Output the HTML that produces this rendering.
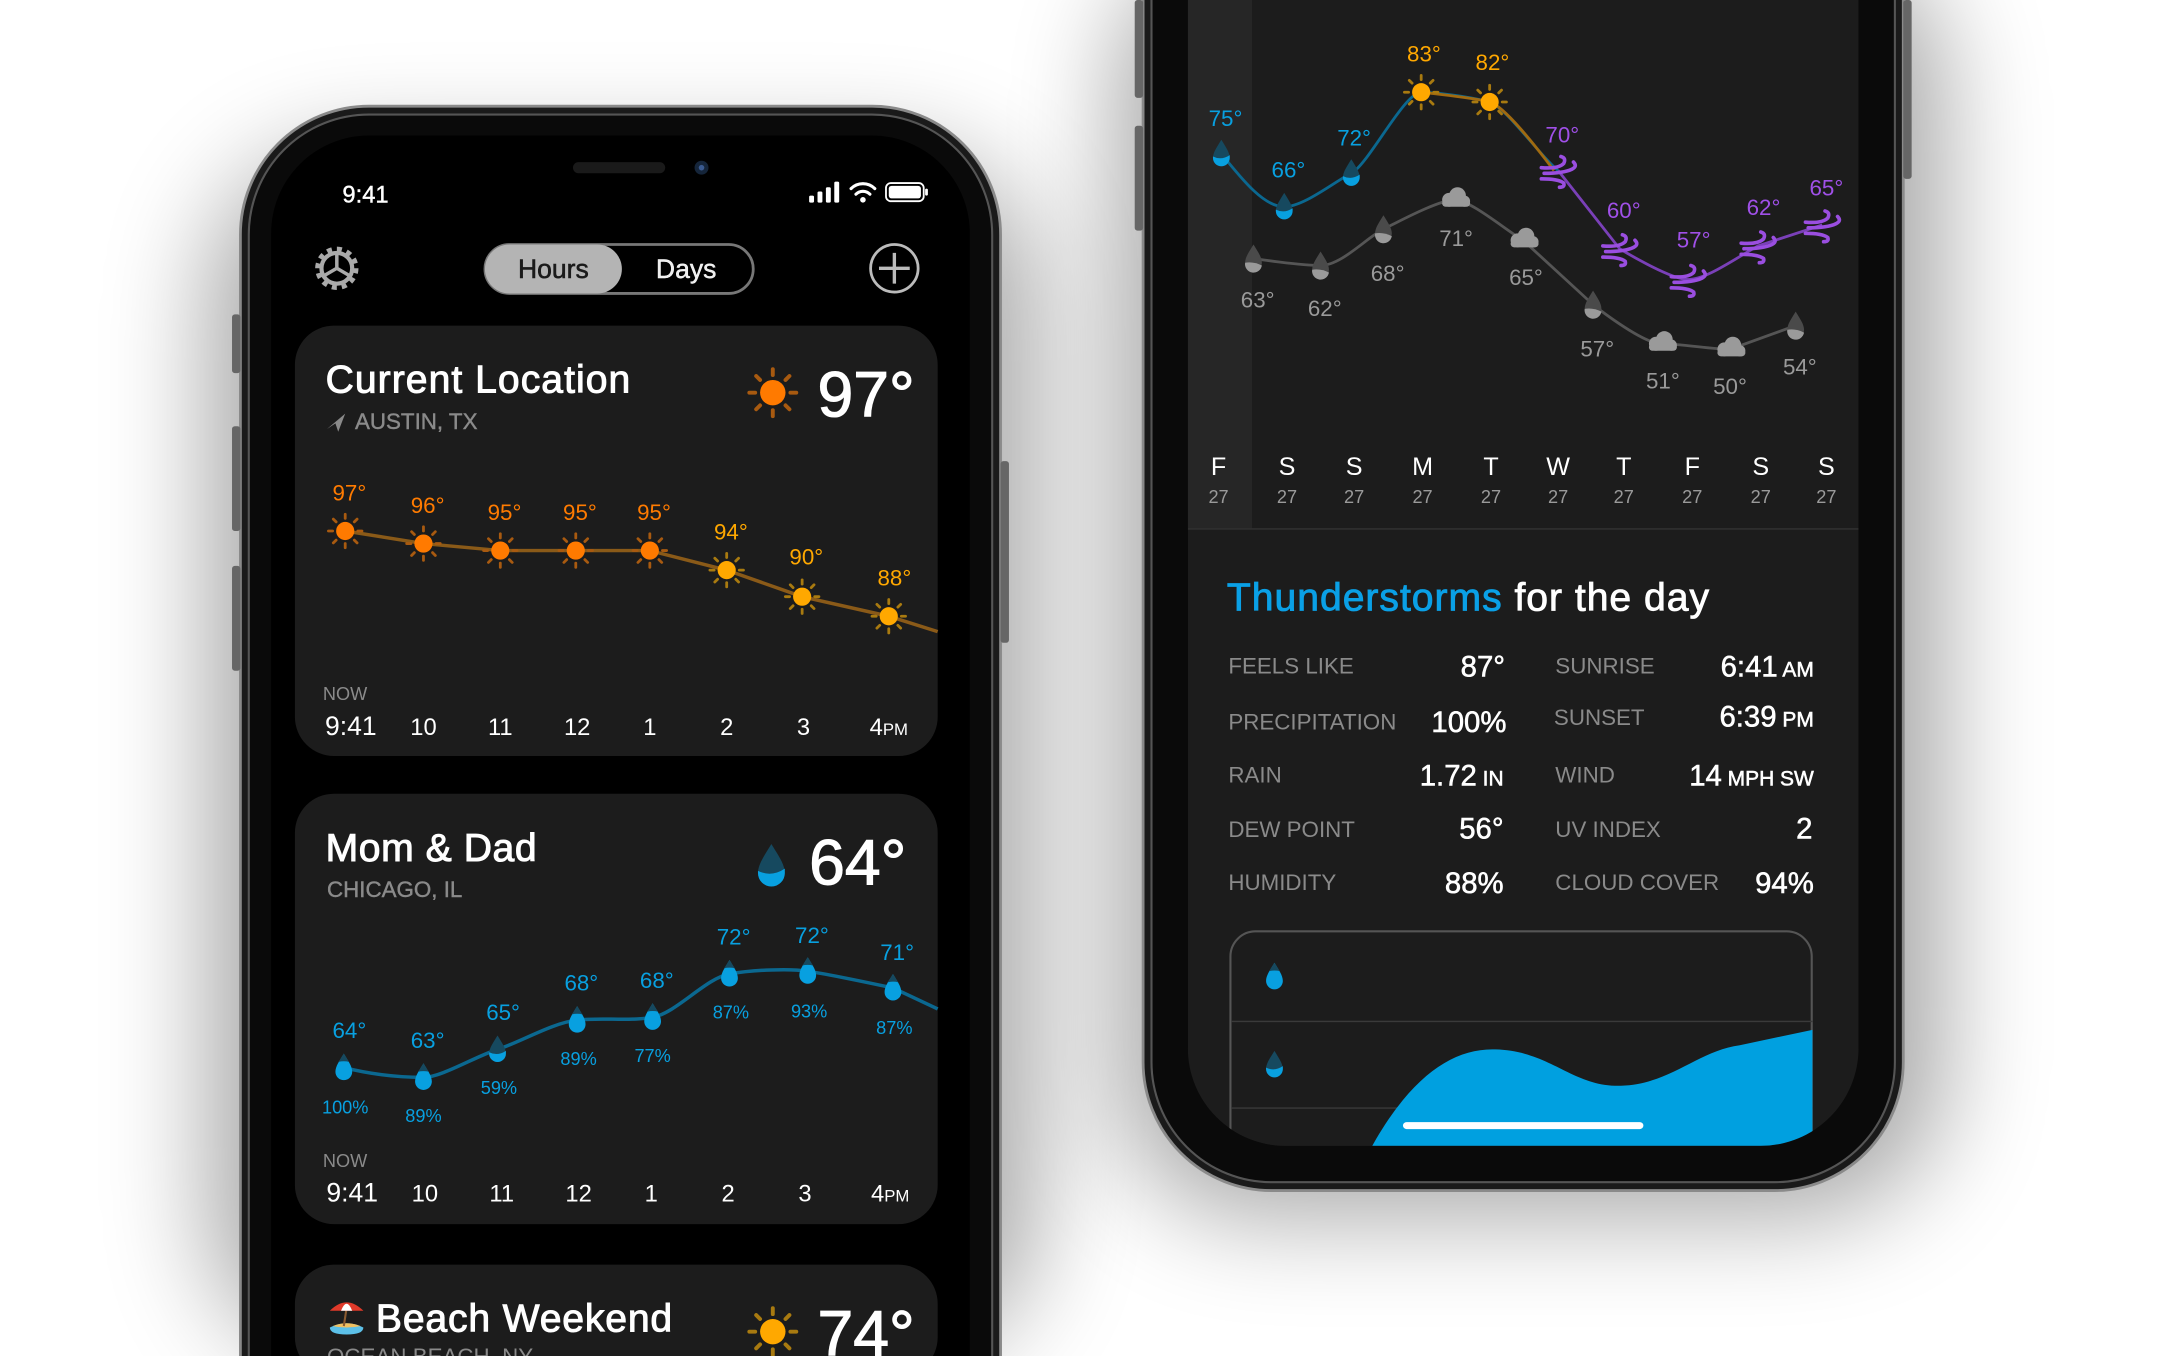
<!DOCTYPE html>
<html><head><meta charset="utf-8"><style>
html,body{margin:0;padding:0;background:#fff;width:2180px;height:1356px;overflow:hidden}
svg{display:block;overflow:hidden}
text{font-family:"Liberation Sans","Noto Sans CJK SC",sans-serif}
.b{stroke:#fff;stroke-width:.5}
</style></head><body>
<svg width="2180" height="1356" viewBox="0 0 1560 970.4" xmlns="http://www.w3.org/2000/svg">
<defs>
<clipPath id="page"><rect x="0" y="0" width="1560" height="970.4"/></clipPath>
<filter id="sh" x="-30%" y="-30%" width="160%" height="160%"><feGaussianBlur stdDeviation="38"/></filter>
<g id="sunO"><g stroke="#a85a10" stroke-width="2" stroke-linecap="round"><line x1="0" y1="-12" x2="0" y2="-9"/><line x1="0" y1="12" x2="0" y2="9"/><line x1="-12" y1="0" x2="-9" y2="0"/><line x1="12" y1="0" x2="9" y2="0"/><line x1="-8.5" y1="-8.5" x2="-6.5" y2="-6.5"/><line x1="8.5" y1="8.5" x2="6.5" y2="6.5"/><line x1="-8.5" y1="8.5" x2="-6.5" y2="6.5"/><line x1="8.5" y1="-8.5" x2="6.5" y2="-6.5"/></g><circle r="6.5" fill="#ff7a00"/></g>
<g id="sunY"><g stroke="#a87a10" stroke-width="2" stroke-linecap="round"><line x1="0" y1="-12" x2="0" y2="-9"/><line x1="0" y1="12" x2="0" y2="9"/><line x1="-12" y1="0" x2="-9" y2="0"/><line x1="12" y1="0" x2="9" y2="0"/><line x1="-8.5" y1="-8.5" x2="-6.5" y2="-6.5"/><line x1="8.5" y1="8.5" x2="6.5" y2="6.5"/><line x1="-8.5" y1="8.5" x2="-6.5" y2="6.5"/><line x1="8.5" y1="-8.5" x2="6.5" y2="-6.5"/></g><circle r="6.5" fill="#ffa800"/></g>
<g id="dropB"><path d="M0,-10 C3,-5 6,-1 6,3 A6,6 0 0 1 -6,3 C-6,-1 -3,-5 0,-10Z" fill="#16495f"/><path d="M-6,2 Q0,5 6,1 L6,3 A6,6 0 0 1 -6,3Z" fill="#08a0e0"/></g>
<g id="dropF"><path d="M0,-10 C3,-5 6,-1 6,3 A6,6 0 0 1 -6,3 C-6,-1 -3,-5 0,-10Z" fill="#08a0e0"/><path d="M0,-10 C2,-7 3,-5 4,-4 Q0,-5 -4,-4 C-3,-5 -2,-7 0,-10Z" fill="#16495f"/></g>
<g id="dropG"><path d="M0,-10 C3,-5 6,-1 6,3 A6,6 0 0 1 -6,3 C-6,-1 -3,-5 0,-10Z" fill="#4a4a4a"/><path d="M-6,3 Q0,2 6,5 A6,6 0 0 1 -6,3Z" fill="#9a9a9a"/></g>
<g id="cloud" fill="#9a9a9a"><circle cx="-4" cy="0" r="5"/><circle cx="2" cy="-3" r="6"/><circle cx="7" cy="1" r="4"/><rect x="-9" y="0" width="20" height="5" rx="2.5"/></g>
<g id="wind" fill="none" stroke="#9a4ee0" stroke-width="2.6" stroke-linecap="round"><path d="M-12,-2 Q0,-1 4,-5 Q6,-9 2,-10"/><path d="M-10,2 Q4,2 10,-1 Q14,-3 11,-6"/><path d="M-12,6 Q0,6 4,9 Q5,12 1,12"/></g>
</defs>
<g clip-path="url(#page)">
<!-- shadows -->
<rect x="150" y="110" width="590" height="860" rx="100" fill="#000" opacity=".35" filter="url(#sh)"/>
<rect x="800" y="-40" width="590" height="910" rx="100" fill="#000" opacity=".35" filter="url(#sh)"/>

<!-- LEFT PHONE -->
<rect x="172" y="76" width="544" height="1000" rx="92" fill="#1a1a1a" stroke="#8a8a8a" stroke-width="2"/>
<rect x="178" y="82" width="532" height="990" rx="86" fill="#0a0a0a" stroke="#555" stroke-width="1.5"/>
<rect x="166" y="225" width="6" height="42" rx="2" fill="#666"/>
<rect x="166" y="305" width="6" height="75" rx="2" fill="#666"/>
<rect x="166" y="405" width="6" height="75" rx="2" fill="#666"/>
<rect x="716" y="330" width="6" height="130" rx="2" fill="#666"/>
<rect x="194" y="97" width="500" height="980" rx="70" fill="#000"/>
<rect x="410" y="116" width="66" height="8" rx="4" fill="#1a1a1a"/>
<circle cx="502" cy="120" r="5" fill="#15253a"/><circle cx="502" cy="120" r="2" fill="#3a5a90"/>
<text x="245" y="145" fill="#fff" font-size="17" class="b" style="stroke-width:.3">9:41</text>
<g fill="#fff"><rect x="579" y="140" width="3.5" height="5" rx="1"/><rect x="585" y="137" width="3.5" height="8" rx="1"/><rect x="591" y="134" width="3.5" height="11" rx="1"/><rect x="597" y="130" width="3.5" height="15" rx="1"/></g>
<g fill="none" stroke="#fff" stroke-width="2.2" stroke-linecap="round"><path d="M609,135 A12,12 0 0 1 626,135"/><path d="M612.5,139 A7,7 0 0 1 622.5,139"/></g><circle cx="617.5" cy="143" r="2" fill="#fff"/>
<rect x="634" y="131" width="27" height="13" rx="3.5" fill="none" stroke="#fff" stroke-width="1.3"/><rect x="636" y="133" width="23" height="9" rx="2" fill="#fff"/><rect x="662" y="135" width="2" height="5" rx="1" fill="#fff"/>
<g transform="translate(241,192)" fill="none" stroke="#aaa"><circle r="13" stroke-width="5" stroke-dasharray="3.4 3.4"/><circle r="11" stroke-width="3"/><path d="M0,0 L0,-10 M0,0 L8.6,5 M0,0 L-8.6,5" stroke-width="2.5"/></g>
<rect x="347" y="175" width="192" height="35" rx="17.5" fill="#000" stroke="#777" stroke-width="2"/>
<rect x="347" y="175" width="98" height="35" rx="17.5" fill="#b4b4b4"/>
<text x="396" y="199" fill="#1a1a1a" font-size="19" text-anchor="middle" stroke="#1a1a1a" stroke-width=".4">Hours</text>
<text x="491" y="199" fill="#eee" font-size="19" text-anchor="middle" class="b" style="stroke-width:.3">Days</text>
<circle cx="640" cy="192" r="17" fill="none" stroke="#bbb" stroke-width="2"/><path d="M640,181 V203 M629,192 H651" stroke="#bbb" stroke-width="2.4"/>

<!-- card 1 -->
<rect x="211" y="233" width="460" height="308" rx="28" fill="#1c1c1c"/>
<text x="233" y="281" fill="#fff" font-size="28" textLength="218" class="b" style="stroke-width:.7">Current Location</text>
<path d="M234,307 L247,296 L242,309 L240,303Z" fill="#8a8a8a"/>
<text x="254" y="307" fill="#8a8a8a" font-size="16" stroke="#8a8a8a" stroke-width=".3">AUSTIN, TX</text>
<g transform="translate(553,281) scale(1.4)"><use href="#sunO"/></g>
<text x="585" y="298" fill="#fff" font-size="46" class="b" style="stroke-width:.8">97°</text>
<polyline points="247,380 303,389 358,394 412,394 465,394 520,408 574,427 636,441 671,452" fill="none" stroke="#8a5a18" stroke-width="2.5"/>
<use href="#sunO" x="247" y="380"/><use href="#sunO" x="303" y="389"/><use href="#sunO" x="358" y="394"/><use href="#sunO" x="412" y="394"/><use href="#sunO" x="465" y="394"/>
<use href="#sunY" x="520" y="408"/><use href="#sunY" x="574" y="427"/><use href="#sunY" x="636" y="441"/>
<g font-size="16" text-anchor="middle"><text x="250" y="358" fill="#ff7b00">97°</text><text x="306" y="367" fill="#ff7b00">96°</text><text x="361" y="372" fill="#ff7b00">95°</text><text x="415" y="372" fill="#ff7b00">95°</text><text x="468" y="372" fill="#ff7b00">95°</text><text x="523" y="386" fill="#ffa800">94°</text><text x="577" y="404" fill="#ffa800">90°</text><text x="640" y="419" fill="#ffa800">88°</text></g>
<text x="231" y="501" fill="#8a8a8a" font-size="13">NOW</text>
<g fill="#fff" font-size="17" text-anchor="middle"><text x="251" y="526" font-size="19">9:41</text><text x="303" y="526">10</text><text x="358" y="526">11</text><text x="413" y="526">12</text><text x="465" y="526">1</text><text x="520" y="526">2</text><text x="575" y="526">3</text><text x="636" y="526">4<tspan font-size="12">PM</tspan></text></g>

<!-- card 2 -->
<rect x="211" y="568" width="460" height="308" rx="28" fill="#1c1c1c"/>
<text x="233" y="616" fill="#fff" font-size="28" textLength="151" class="b" style="stroke-width:.7">Mom &amp; Dad</text>
<text x="234" y="642" fill="#8a8a8a" font-size="16" stroke="#8a8a8a" stroke-width=".3">CHICAGO, IL</text>
<g transform="translate(552,620) scale(1.6)"><use href="#dropB"/></g>
<text x="579" y="633" fill="#fff" font-size="46" class="b" style="stroke-width:.8">64°</text>
<path d="M246,764 C270,770 290,771 303,771 S340,756 356,751 S395,732 413,730 S450,731 467,728 S505,700 522,697 S565,693 578,695 S625,704 639,707 L671,722" fill="none" stroke="#0b6890" stroke-width="2.5"/>
<use href="#dropF" x="246" y="764"/><use href="#dropF" x="303" y="771"/><use href="#dropB" x="356" y="751"/><use href="#dropF" x="413" y="730"/><use href="#dropF" x="467" y="728"/><use href="#dropF" x="522" y="697"/><use href="#dropF" x="578" y="695"/><use href="#dropF" x="639" y="707"/>
<g font-size="16" text-anchor="middle" fill="#08a0e0"><text x="250" y="743">64°</text><text x="306" y="750">63°</text><text x="360" y="730">65°</text><text x="416" y="709">68°</text><text x="470" y="707">68°</text><text x="525" y="676">72°</text><text x="581" y="675">72°</text><text x="642" y="687">71°</text></g>
<g font-size="13" text-anchor="middle" fill="#08a0e0"><text x="247" y="797">100%</text><text x="303" y="803">89%</text><text x="357" y="783">59%</text><text x="414" y="762">89%</text><text x="467" y="760">77%</text><text x="523" y="729">87%</text><text x="579" y="728">93%</text><text x="640" y="740">87%</text></g>
<text x="231" y="835" fill="#8a8a8a" font-size="13">NOW</text>
<g fill="#fff" font-size="17" text-anchor="middle"><text x="252" y="860" font-size="19">9:41</text><text x="304" y="860">10</text><text x="359" y="860">11</text><text x="414" y="860">12</text><text x="466" y="860">1</text><text x="521" y="860">2</text><text x="576" y="860">3</text><text x="637" y="860">4<tspan font-size="12">PM</tspan></text></g>

<!-- card 3 -->
<rect x="211" y="905" width="460" height="80" rx="28" fill="#1c1c1c"/>
<g transform="translate(248,942)"><path d="M-12,8 Q0,2 12,8 Q12,13 0,13 Q-12,13 -12,8Z" fill="#5cc0e8"/><path d="M-10,7 Q0,3 10,7 Q0,9 -10,7Z" fill="#f0c060"/><line x1="0" y1="-6" x2="-2" y2="7" stroke="#8a5a30" stroke-width="1.5"/><path d="M-12,-4 Q0,-16 12,-4Z" fill="#e03a2a"/><path d="M-4,-4 Q0,-14 4,-4Z" fill="#fff"/></g>
<text x="269" y="953" fill="#fff" font-size="28" textLength="212" class="b" style="stroke-width:.7">Beach Weekend</text>
<text x="234" y="976" fill="#8a8a8a" font-size="16">OCEAN BEACH, NY</text>
<g transform="translate(553,953) scale(1.4)"><use href="#sunY"/></g>
<text x="585" y="970" fill="#fff" font-size="46" class="b" style="stroke-width:.8">74°</text>

<!-- RIGHT PHONE -->
<rect x="818" y="-150" width="544" height="1002" rx="92" fill="#1a1a1a" stroke="#8a8a8a" stroke-width="2"/>
<rect x="824" y="-144" width="532" height="990" rx="86" fill="#0a0a0a" stroke="#555" stroke-width="1.5"/>
<rect x="1362" y="0" width="6" height="128" rx="2" fill="#666"/>
<rect x="812" y="0" width="6" height="70" rx="2" fill="#666"/>
<rect x="812" y="90" width="6" height="75" rx="2" fill="#666"/>
<clipPath id="scr"><rect x="850" y="-200" width="480" height="1020" rx="70"/></clipPath>
<g clip-path="url(#scr)">
<rect x="850" y="-200" width="480" height="1020" fill="#1c1c1c"/>
<rect x="850" y="0" width="46" height="378" fill="#262626"/>
<line x1="850" y1="378.5" x2="1330" y2="378.5" stroke="#333" stroke-width="1"/>
<path d="M874,110 C890,130 905,148 919,148 S955,130 967,124 S1005,66 1017,66 S1055,70 1066,73 S1105,115 1115,122" fill="none" stroke="#0b6890" stroke-width="2"/>
<path d="M1017,66 S1055,70 1066,73 S1103,110 1112,122" fill="none" stroke="#a06a10" stroke-width="2"/>
<path d="M1115,122 L1159,178 S1195,200 1208,200 S1240,186 1258,176 L1304,161" fill="none" stroke="#7a40b8" stroke-width="2"/>
<path d="M897,185 S930,190 945,190 S978,170 990,164 S1030,143 1041,143 S1078,165 1090,172 L1140,218 S1175,246 1189,246 S1225,250 1238,250 L1285,233" fill="none" stroke="#555" stroke-width="2"/>
<use href="#dropB" x="874" y="110"/><use href="#dropB" x="919" y="148"/><use href="#dropB" x="967" y="124"/>
<use href="#sunY" x="1017" y="66"/><use href="#sunY" x="1066" y="73"/>
<use href="#wind" x="1115" y="122"/><use href="#wind" x="1159" y="178"/><use href="#wind" x="1208" y="200"/><use href="#wind" x="1258" y="176"/><use href="#wind" x="1304" y="161"/>
<use href="#dropG" x="897" y="185"/><use href="#dropG" x="945" y="190"/><use href="#dropG" x="990" y="164"/><use href="#cloud" x="1041" y="143"/><use href="#cloud" x="1090" y="172"/><use href="#dropG" x="1140" y="218"/><use href="#cloud" x="1189" y="246"/><use href="#cloud" x="1238" y="250"/><use href="#dropG" x="1285" y="233"/>
<g font-size="16" text-anchor="middle"><text x="877" y="90" fill="#08a0e0">75°</text><text x="922" y="127" fill="#08a0e0">66°</text><text x="969" y="104" fill="#08a0e0">72°</text><text x="1019" y="44" fill="#ffa800">83°</text><text x="1068" y="50" fill="#ffa800">82°</text><text x="1118" y="102" fill="#a050e8">70°</text><text x="1162" y="156" fill="#a050e8">60°</text><text x="1212" y="177" fill="#a050e8">57°</text><text x="1262" y="154" fill="#a050e8">62°</text><text x="1307" y="140" fill="#a050e8">65°</text></g>
<g font-size="16" text-anchor="middle" fill="#9a9a9a"><text x="900" y="220">63°</text><text x="948" y="226">62°</text><text x="993" y="201">68°</text><text x="1042" y="176">71°</text><text x="1092" y="204">65°</text><text x="1143" y="255">57°</text><text x="1190" y="278">51°</text><text x="1238" y="282">50°</text><text x="1288" y="268">54°</text></g>
<g font-size="18" text-anchor="middle" fill="#fff"><text x="872" y="340">F</text><text x="921" y="340">S</text><text x="969" y="340">S</text><text x="1018" y="340">M</text><text x="1067" y="340">T</text><text x="1115" y="340">W</text><text x="1162" y="340">T</text><text x="1211" y="340">F</text><text x="1260" y="340">S</text><text x="1307" y="340">S</text></g>
<g font-size="13" text-anchor="middle" fill="#9a9a9a"><text x="872" y="360">27</text><text x="921" y="360">27</text><text x="969" y="360">27</text><text x="1018" y="360">27</text><text x="1067" y="360">27</text><text x="1115" y="360">27</text><text x="1162" y="360">27</text><text x="1211" y="360">27</text><text x="1260" y="360">27</text><text x="1307" y="360">27</text></g>
<text x="878" y="437" font-size="28" fill="#fff" textLength="345" class="b" style="stroke-width:.6"><tspan fill="#0aa0e6" stroke="#0aa0e6">Thunderstorms</tspan> for the day</text>
<g font-size="16" fill="#8a8a8a"><text x="879" y="482">FEELS LIKE</text><text x="879" y="522">PRECIPITATION</text><text x="879" y="560">RAIN</text><text x="879" y="599">DEW POINT</text><text x="879" y="637">HUMIDITY</text>
<text x="1113" y="482">SUNRISE</text><text x="1112" y="519">SUNSET</text><text x="1113" y="560">WIND</text><text x="1113" y="599">UV INDEX</text><text x="1113" y="637">CLOUD COVER</text></g>
<g font-size="21" fill="#fff" text-anchor="end" class="b" style="stroke-width:.4"><text x="1077" y="484">87°</text><text x="1078" y="524">100%</text><text x="1076" y="562">1.72<tspan font-size="15"> IN</tspan></text><text x="1076" y="600">56°</text><text x="1076" y="639">88%</text>
<text x="1298" y="484">6:41<tspan font-size="15"> AM</tspan></text><text x="1298" y="520">6:39<tspan font-size="15"> PM</tspan></text><text x="1298" y="562">14<tspan font-size="15"> MPH SW</tspan></text><text x="1297" y="600">2</text><text x="1298" y="639">94%</text></g>
<rect x="880.5" y="666.5" width="416" height="200" rx="18" fill="#1c1c1c" stroke="#555" stroke-width="1.5"/>
<line x1="881" y1="731" x2="1297" y2="731" stroke="#3a3a3a"/><line x1="881" y1="793" x2="1297" y2="793" stroke="#3a3a3a"/>
<path d="M982,820 C1010,770 1040,750 1070,751 C1110,752 1125,778 1160,777 C1195,776 1215,752 1245,748 L1297,737 L1297,820Z" fill="#00a0e0"/>
<use href="#dropF" x="912" y="699"/><use href="#dropB" x="912" y="762"/>
<rect x="1004" y="803" width="172" height="5" rx="2.5" fill="#fff"/>
</g>
</g>
</svg>
</body></html>
